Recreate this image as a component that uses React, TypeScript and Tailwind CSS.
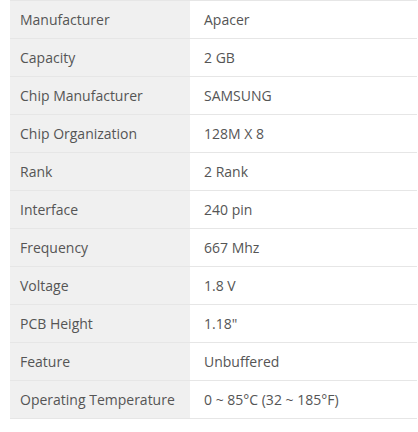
import React from "react";

const specs: [string, string][] = [
  ["Manufacturer", "Apacer"],
  ["Capacity", "2 GB"],
  ["Chip Manufacturer", "SAMSUNG"],
  ["Chip Organization", "128M X 8"],
  ["Rank", "2 Rank"],
  ["Interface", "240 pin"],
  ["Frequency", "667 Mhz"],
  ["Voltage", "1.8 V"],
  ["PCB Height", "1.18\""],
  ["Feature", "Unbuffered"],
  ["Operating Temperature", "0 ~ 85°C (32 ~ 185°F)"],
];

export default function App() {
  return (
    <div className="w-[418px] h-[432px] bg-white pl-[10px] pr-[1px] font-['Open_Sans',sans-serif] text-[14px] text-[#555]">
      <div className="border-t border-[#e6e6e6]">
        {specs.map(([label, value]) => (
          <div key={label} className="flex h-[38px] border-b border-[#e6e6e6]">
            <div className="w-[180px] bg-[#f0f0f0] pl-[10px] flex items-center">{label}</div>
            <div className="flex-1 pl-[14px] flex items-center">{value}</div>
          </div>
        ))}
      </div>
    </div>
  );
}
